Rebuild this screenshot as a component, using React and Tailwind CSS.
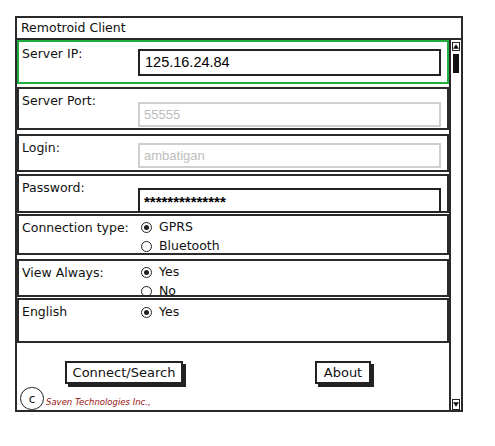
import React from "react";

const sketch = { fontFamily: '"DejaVu Sans", "Noto Sans", sans-serif' };
const plain = { fontFamily: '"Liberation Sans", Arial, sans-serif' };

function Radio({ checked, label }) {
  return (
    <div className="flex items-center h-[19px] gap-[7px]">
      <span className="w-[11px] h-[11px] rounded-full border-[1.5px] border-[#222] flex items-center justify-center">
        {checked && <span className="w-[5px] h-[5px] rounded-full bg-[#222]" />}
      </span>
      <span className="text-[12.5px] text-[#111]">{label}</span>
    </div>
  );
}

function Section({ label, children, h, green, mt = "mt-[3px]" }) {
  return (
    <div
      className={`flex ${mt} border-2 ${green ? "border-[#1fae3e]" : "border-[#2a2a2a]"}`}
      style={{ height: h }}
    >
      <div className="w-[119px] pl-[3px] pt-[3px] text-[12.5px] text-[#111]">{label}</div>
      <div className="flex-1 pr-[6px]">{children}</div>
    </div>
  );
}

export default function App() {
  return (
    <div className="w-[495px] h-[446px] bg-white pt-[16px] pl-[15px]" style={sketch}>
      <div className="w-[448px] border-2 border-[#2a2a2a]">
        <div className="h-[22px] border-b-2 border-[#2a2a2a] pl-[4px] flex items-center text-[12.5px] text-[#111]">
          Remotroid Client
        </div>
        <div className="flex">
          <div className="w-[432px]">
            <Section label="Server IP:" h={44} green mt="mt-0">
              <div className="mt-[7px] h-[27px] border-2 border-[#222] flex items-center pl-[5px] text-[14.5px] text-black" style={plain}>
                125.16.24.84
              </div>
            </Section>
            <Section label="Server Port:" h={43}>
              <div className="mt-[13px] h-[25px] border-2 border-[#cfcfcf] flex items-center pl-[4px] text-[13px] text-[#bdbdbd]" style={plain}>
                55555
              </div>
            </Section>
            <Section label="Login:" h={38} mt="mt-[4px]">
              <div className="mt-[7px] h-[25px] border-2 border-[#cfcfcf] flex items-center pl-[4px] text-[13px] text-[#bdbdbd]" style={plain}>
                ambatigan
              </div>
            </Section>
            <Section label="Password:" h={39} mt="mt-[2px]">
              <div className="mt-[12px] h-[25px] border-2 border-[#222] flex items-center pl-[4px] text-[15px] font-bold text-black" style={plain}>
                <span className="mt-[3px]">**************</span>
              </div>
            </Section>
            <Section label="Connection type:" h={41} mt="mt-[1px]">
              <div className="pt-[2px] pl-[3px]">
                <Radio checked label="GPRS" />
                <Radio label="Bluetooth" />
              </div>
            </Section>
            <Section label="View Always:" h={38} mt="mt-[4px]">
              <div className="pt-[2px] pl-[3px]">
                <Radio checked label="Yes" />
                <Radio label="No" />
              </div>
            </Section>
            <Section label="English" h={45} mt="mt-[1px]">
              <div className="pt-[3px] pl-[3px]">
                <Radio checked label="Yes" />
              </div>
            </Section>
            <div className="h-[67px]">
              <div className="flex pt-[18px]">
                <div className="ml-[48px] w-[118px] h-[23px] border-2 border-[#222] bg-white shadow-[3px_3px_0_#222] flex items-center justify-center text-[13px] text-[#111]">
                  Connect/Search
                </div>
                <div className="ml-[132px] w-[56px] h-[23px] border-2 border-[#222] bg-white shadow-[3px_3px_0_#222] flex items-center justify-center text-[13px] text-[#111]">
                  About
                </div>
              </div>
              <div className="flex items-end mt-[3px] pl-[3px]">
                <div className="w-[24px] h-[23px] rounded-full border-[1.5px] border-[#222] flex items-center justify-center text-[12px] text-[#111]">
                  c
                </div>
                <span className="ml-[2px] mb-[1px] text-[8.5px] italic text-[#9b1010]" style={{ fontFamily: '"DejaVu Sans", sans-serif' }}>
                  Saven Technologies Inc.,
                </span>
              </div>
            </div>
          </div>
          <div className="w-[12px] border-l-2 border-[#2a2a2a] flex flex-col justify-between">
            <div>
              <div className="mt-[2px] h-[9px] mx-[1px] border border-[#222] flex items-center justify-center">
                <svg width="7" height="5" viewBox="0 0 7 5"><path d="M0 5 L3.5 0 L7 5 Z" fill="#111" /></svg>
              </div>
              <div className="mt-[3px] ml-[2px] w-[6px] h-[19px] bg-[#111]" />
            </div>
            <div className="h-[11px] mx-[1px] border border-[#222] flex items-center justify-center">
              <svg width="7" height="5" viewBox="0 0 7 5"><path d="M0 0 L3.5 5 L7 0 Z" fill="#111" /></svg>
            </div>
          </div>
        </div>
      </div>
    </div>
  );
}
